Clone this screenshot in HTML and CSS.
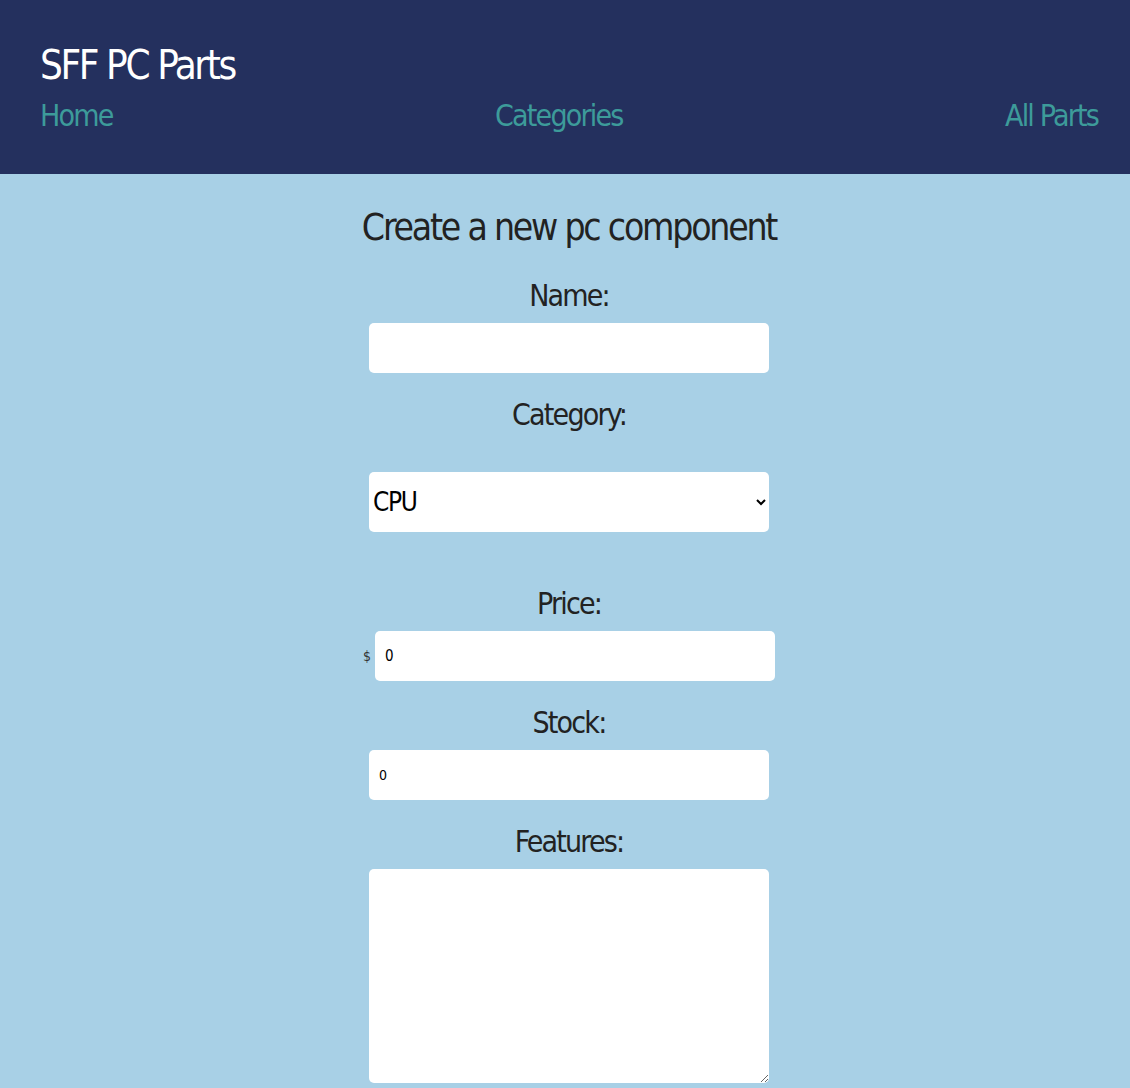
FILE: index.html
```html
<!DOCTYPE html>
<html lang="en">
<head>
<meta charset="utf-8">
<title>SFF PC Parts</title>
<link rel="stylesheet" href="styles.css">
</head>
<body>
<header class="site-header">
  <h1 class="site-title">SFF PC Parts</h1>
  <nav class="site-nav">
    <a class="nav-link" href="#">Home</a>
    <a class="nav-link" href="#">Categories</a>
    <a class="nav-link" href="#">All Parts</a>
  </nav>
</header>
<main class="content">
  <h2 class="page-title">Create a new pc component</h2>
  <form class="part-form">
    <label class="field-label" for="name">Name:</label>
    <input class="field-input" id="name" type="text">
    <label class="field-label" for="category">Category:</label>
    <select class="field-select" id="category">
      <option>CPU</option>
      <option>GPU</option>
      <option>Motherboard</option>
    </select>
    <label class="field-label" for="price">Price:</label>
    <div class="price-row">
      <span class="currency">$</span>
      <input class="field-input price-input" id="price" type="number" value="0">
    </div>
    <label class="field-label" for="stock">Stock:</label>
    <input class="field-input stock-input" id="stock" type="number" value="0">
    <label class="field-label" for="features">Features:</label>
    <textarea class="field-textarea" id="features"></textarea>
    <button class="submit-btn" type="submit">Submit</button>
  </form>
</main>
</body>
</html>
```

FILE: styles.css
```css
html, body {
  margin: 0;
  padding: 0;
}

body {
  background: #A8D0E6;
  font-family: "DejaVu Sans Condensed", "Liberation Sans Narrow", "Noto Sans", sans-serif;
  color: #222;
}

.site-header {
  background: #24305E;
  padding: 45px 32px 43px 40px;
}

.site-title {
  margin: 0;
  font-size: 40px;
  line-height: 1;
  font-weight: 400;
  letter-spacing: -0.06em;
  color: #fff;
}

.site-nav {
  display: flex;
  justify-content: space-between;
  margin-top: 16px;
}

.nav-link {
  font-size: 30px;
  line-height: 1;
  letter-spacing: -0.06em;
  color: #3d9b9a;
  text-decoration: none;
}

.content {
  padding: 35px 0 0 8px;
  text-align: center;
}

.page-title {
  margin: 0 0 8px;
  font-size: 37px;
  line-height: 1;
  font-weight: 400;
  letter-spacing: -0.06em;
}

.part-form {
  display: flex;
  flex-direction: column;
  align-items: center;
}

.field-label {
  display: block;
  margin: 27px 0 12px;
  font-size: 30px;
  line-height: 1;
  letter-spacing: -0.06em;
}

.field-input,
.field-select,
.field-textarea {
  box-sizing: border-box;
  width: 400px;
  border: none;
  border-radius: 5px;
  background: #fff;
  font-family: inherit;
}

.field-input {
  height: 50px;
  padding: 0 10px;
  font-size: 15px;
  color: #000;
}

.stock-input {
  font-size: 14px;
}

.field-select {
  height: 60px;
  margin: 30px 0;
  padding: 0;
  font-size: 26px;
  letter-spacing: -0.05em;
  color: #000;
}

.price-row {
  display: flex;
  align-items: center;
  gap: 5px;
}

.currency {
  width: 7px;
  font-size: 14px;
  color: #333;
}

.field-textarea {
  height: 214px;
  padding: 8px 10px;
  font-size: 15px;
}

.submit-btn {
  margin: 20px 0 40px;
  padding: 10px 30px;
  border: none;
  border-radius: 5px;
  background: #24305E;
  color: #fff;
  font-family: inherit;
  font-size: 24px;
}
```
